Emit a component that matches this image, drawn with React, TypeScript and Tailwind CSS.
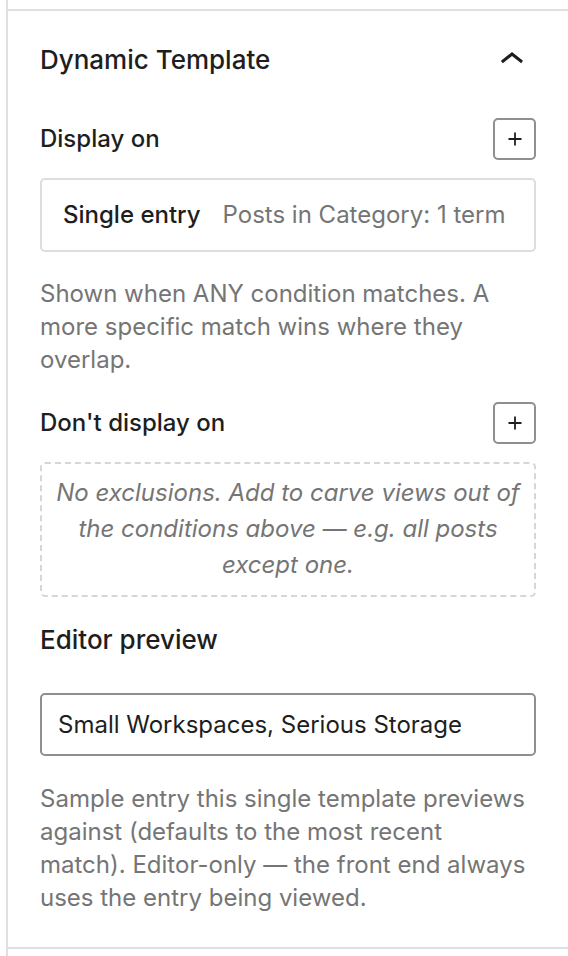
import React from "react";

function PlusButton() {
  return (
    <button className="flex h-[42px] w-[43px] items-center justify-center rounded-[5px] border-2 border-[#8f8f8f] bg-white">
      <svg width="16" height="16" viewBox="0 0 16 16" fill="none">
        <path d="M8 1.5V14.5M1.5 8H14.5" stroke="#1e1e1e" strokeWidth="1.8" />
      </svg>
    </button>
  );
}

export default function App() {
  return (
    <div
      className="h-[956px] w-[568px] bg-white pl-[6px]"
      style={{ fontFamily: "Inter, 'Noto Sans', sans-serif" }}
    >
      <div className="flex h-full flex-col border-l-2 border-[#e0e0e0]">
        <div className="h-[9px] shrink-0" />
        <div className="flex flex-col border-t-2 border-b-2 border-[#e0e0e0] px-[32px] pb-[33px]">
          <div className="mt-[32px] flex h-[34px] items-center justify-between">
            <span className="text-[26px] font-medium leading-[34px] text-[#1e1e1e]">Dynamic Template</span>
            <svg width="48" height="48" viewBox="0 0 24 24">
              <path d="M6.5 12.4L12 8l5.5 4.4-.9 1.2L12 10l-4.6 3.6-1-1.2z" fill="#1e1e1e" />
            </svg>
          </div>

          <div className="mt-[41px] flex h-[42px] items-center justify-between">
            <span className="text-[24px] font-medium text-[#1e1e1e]">Display on</span>
            <PlusButton />
          </div>

          <div className="mt-[18px] flex h-[74px] items-center gap-[22px] rounded-[5px] border-2 border-[#dddddd] px-[21px]">
            <span className="text-[24px] font-medium text-[#1e1e1e]">Single entry</span>
            <span className="text-[24px] text-[#757575]">Posts in Category: 1 term</span>
          </div>

          <p className="mt-[25px] text-[24px] leading-[33px] text-[#757575]">
            Shown when ANY condition matches. A more specific match wins where they overlap.
          </p>

          <div className="mt-[26px] flex h-[42px] items-center justify-between">
            <span className="text-[24px] font-medium text-[#1e1e1e]">Don't display on</span>
            <PlusButton />
          </div>

          <div className="mt-[18px] rounded-[5px] border-2 border-dashed border-[#d6d6d6] px-[10px] pt-[11px] pb-[12px] text-center">
            <p className="text-[24px] italic leading-[36px] text-[#757575]">
              No exclusions. Add to carve views out of the conditions above — e.g. all posts except one.
            </p>
          </div>

          <div className="mt-[26px] text-[26px] font-medium leading-[34px] text-[#1e1e1e]">Editor preview</div>

          <div className="mt-[36px] flex h-[63px] items-center rounded-[5px] border-2 border-[#8f8f8f] px-[16px] text-[24px] text-[#1e1e1e]">
            Small Workspaces, Serious Storage
          </div>

          <p className="mt-[26px] pr-[8px] text-[24px] leading-[33px] text-[#757575]">
            Sample entry this single template previews against (defaults to the most recent match). Editor-only — the front end always uses the entry being viewed.
          </p>
        </div>
      </div>
    </div>
  );
}
